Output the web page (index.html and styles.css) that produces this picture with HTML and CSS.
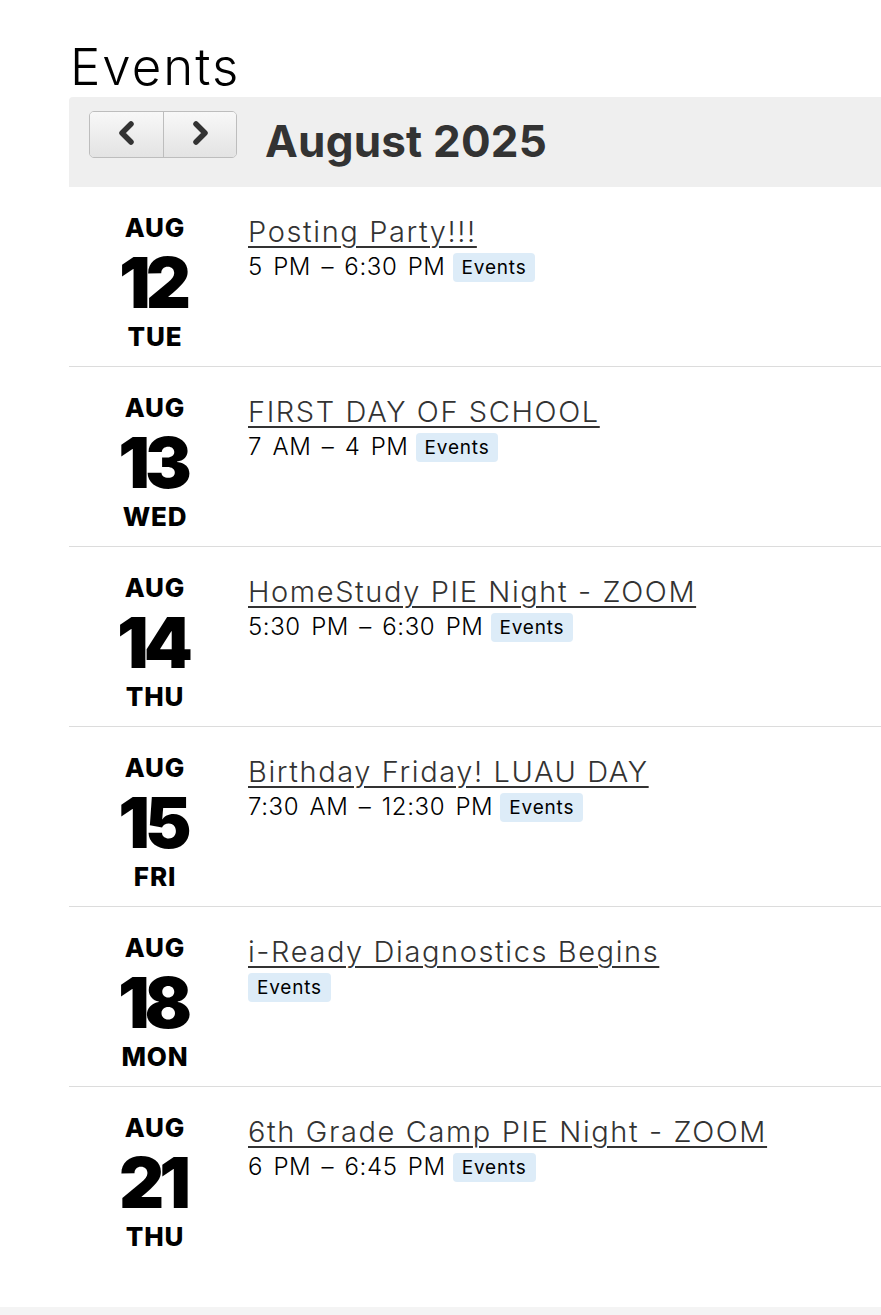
FILE: index.html
```html
<!DOCTYPE html>
<html>
  <head>
    <title>Events</title>
    <link rel="stylesheet" href="styles.css">
  </head>
  <body>
    <div class="page">
      <h1>Events</h1>

      <div class="cal-header">
        <div class="nav-group">
          <button class="nav-btn" aria-label="Previous month">
            <svg width="22" height="26" viewBox="0 0 22 26"><path d="M15 4 L6 13 L15 22" fill="none" stroke="#333" stroke-width="5.5" stroke-linecap="round" stroke-linejoin="round"/></svg>
          </button>
          <button class="nav-btn" aria-label="Next month">
            <svg width="22" height="26" viewBox="0 0 22 26"><path d="M7 4 L16 13 L7 22" fill="none" stroke="#333" stroke-width="5.5" stroke-linecap="round" stroke-linejoin="round"/></svg>
          </button>
        </div>
        <h2>August 2025</h2>
      </div>

      <ul class="event-list">
        <li class="event">
          <div class="event-date">
            <span class="month">AUG</span>
            <span class="day">12</span>
            <span class="weekday">TUE</span>
          </div>
          <div class="event-info">
            <a href="#" class="event-title">Posting Party!!!</a>
            <div class="event-meta"><span class="time">5 PM &ndash; 6:30 PM</span><span class="tag">Events</span></div>
          </div>
        </li>
        <li class="event">
          <div class="event-date">
            <span class="month">AUG</span>
            <span class="day">13</span>
            <span class="weekday">WED</span>
          </div>
          <div class="event-info">
            <a href="#" class="event-title">FIRST DAY OF SCHOOL</a>
            <div class="event-meta"><span class="time">7 AM &ndash; 4 PM</span><span class="tag">Events</span></div>
          </div>
        </li>
        <li class="event">
          <div class="event-date">
            <span class="month">AUG</span>
            <span class="day">14</span>
            <span class="weekday">THU</span>
          </div>
          <div class="event-info">
            <a href="#" class="event-title">HomeStudy PIE Night - ZOOM</a>
            <div class="event-meta"><span class="time">5:30 PM &ndash; 6:30 PM</span><span class="tag">Events</span></div>
          </div>
        </li>
        <li class="event">
          <div class="event-date">
            <span class="month">AUG</span>
            <span class="day">15</span>
            <span class="weekday">FRI</span>
          </div>
          <div class="event-info">
            <a href="#" class="event-title">Birthday Friday! LUAU DAY</a>
            <div class="event-meta"><span class="time">7:30 AM &ndash; 12:30 PM</span><span class="tag">Events</span></div>
          </div>
        </li>
        <li class="event">
          <div class="event-date">
            <span class="month">AUG</span>
            <span class="day">18</span>
            <span class="weekday">MON</span>
          </div>
          <div class="event-info">
            <a href="#" class="event-title">i-Ready Diagnostics Begins</a>
            <div class="event-meta"><span class="tag">Events</span></div>
          </div>
        </li>
        <li class="event">
          <div class="event-date">
            <span class="month">AUG</span>
            <span class="day">21</span>
            <span class="weekday">THU</span>
          </div>
          <div class="event-info">
            <a href="#" class="event-title">6th Grade Camp PIE Night - ZOOM</a>
            <div class="event-meta"><span class="time">6 PM &ndash; 6:45 PM</span><span class="tag">Events</span></div>
          </div>
        </li>
      </ul>
    </div>
    <div class="footer"></div>
  </body>
</html>
```

FILE: styles.css
```css
body,
h1,
h2,
ul,
li,
button {
  margin: 0;
  padding: 0;
  box-sizing: border-box;
}

body {
  background: #fff;
  color: #000;
  font-family: "Inter", "DejaVu Sans", sans-serif;
}

/* Page wrapper */
.page {
  margin-left: 69px;
  padding-top: 37px;
  padding-bottom: 40px;
}

h1 {
  font-size: 51px;
  font-weight: 300;
  line-height: 60px;
  letter-spacing: 2px;
  padding-left: 1px;
}

/* Month header */
.cal-header {
  box-sizing: border-box;
  display: flex;
  align-items: flex-start;
  gap: 28px;
  height: 90px;
  padding: 14px 0 0 20px;
  background: #efefef;
  border-radius: 4px 0 0 0;
}

.nav-group {
  display: flex;
  border: 1px solid #bdbdbd;
  border-radius: 5px;
  overflow: hidden;
}

.nav-btn {
  width: 73px;
  height: 45px;
  border: 0;
  background: linear-gradient(#f8f8f8, #e3e3e3);
  display: flex;
  align-items: center;
  justify-content: center;
  padding-bottom: 4px;
}

.nav-btn + .nav-btn {
  border-left: 1px solid #bdbdbd;
}

h2 {
  font-size: 44px;
  font-weight: 700;
  line-height: 54px;
  margin-top: 3px;
  color: #333;
  letter-spacing: 0.2px;
}

/* Event list */
.event-list {
  list-style: none;
}

.event {
  display: flex;
  height: 180px;
  padding-top: 27px;
  border-bottom: 1px solid #dcdcdc;
}

.event:last-child {
  border-bottom: 0;
}

.event-date {
  width: 172px;
  flex-shrink: 0;
  display: flex;
  flex-direction: column;
  align-items: center;
  font-weight: 800;
}

.month,
.weekday {
  font-size: 26px;
  line-height: 28px;
  letter-spacing: 0.8px;
}

.day {
  font-size: 70px;
  line-height: 81px;
  font-weight: 900;
  letter-spacing: -5px;
  padding-right: 5px;
}

.event-info {
  padding-left: 7px;
}

.event-title {
  font-size: 29px;
  font-weight: 300;
  color: #333;
  letter-spacing: 1.6px;
  text-decoration: underline;
  text-decoration-thickness: 2px;
  text-underline-offset: 4px;
  line-height: 35px;
}

.event-meta {
  display: flex;
  align-items: center;
  gap: 7px;
  margin-top: 1px;
}

.time {
  font-size: 24px;
  font-weight: 300;
  letter-spacing: 0.6px;
  word-spacing: 3px;
}

.tag {
  background: #ddecf8;
  border-radius: 4px;
  font-size: 19px;
  letter-spacing: 0.8px;
  line-height: 21px;
  padding: 4px 9px;
  margin-top: 3px;
}

.footer {
  height: 8px;
  background: #f4f4f4;
}
```
